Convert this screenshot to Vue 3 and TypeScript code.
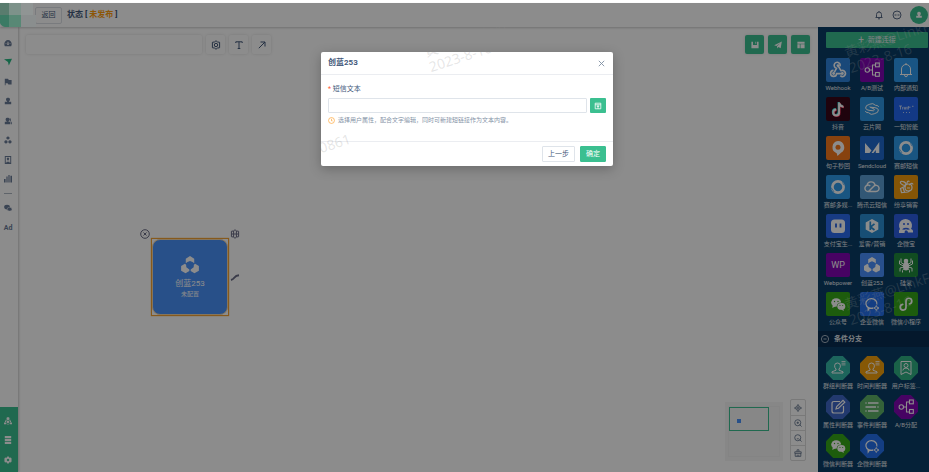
<script setup lang="ts">
import { ref } from 'vue'

interface Tile {
  name: string
  icon: string
  color: string
}

const smsText = ref('')
const keyword = ref('')

const webhook = '<g fill="none" stroke="#fff" stroke-width="1.6"><path d="M14 8.300A3 3 0 1 0 10.500 10.200L8.300 14.300"/><path d="M12 7.500L15 12.800A3 3 0 1 1 14.300 17.600"/><path d="M7.500 12.400A3 3 0 1 0 10.600 15.600H16"/></g><g fill="#fff"><circle cx="12" cy="7.600" r="1.400"/><circle cx="7.600" cy="15.500" r="1.400"/><circle cx="16.400" cy="15.500" r="1.400"/></g>'
const split = '<g fill="none" stroke="#fff" stroke-width="1.1"><circle cx="7.300" cy="12" r="2.200"/><path d="M9.500 12H12.500M15.500 7H12.500V17H15.500"/><rect x="15.500" y="5" width="3.800" height="3.800"/><rect x="15.500" y="14.500" width="3.800" height="3.800"/></g>'
const ring = '<circle cx="12" cy="12" r="5.600" fill="none" stroke="#fff" stroke-width="2.700"/><path d="M5 12.500Q7 15 8 17M17 5.500Q16 8 18 10" stroke="#2e9bec" stroke-width=".7" fill="none"/>'
const wechat = '<g fill="#fff"><ellipse cx="10.200" cy="10.500" rx="5" ry="4.300"/><path d="M6.800 13L6.300 16L9.500 14.300Z"/></g><ellipse cx="15.300" cy="14.300" rx="4.600" ry="3.900" fill="#35a818"/><ellipse cx="15.300" cy="14.400" rx="4" ry="3.400" fill="#fff"/><path d="M17 17L18 19L15 17.600Z" fill="#fff"/><g fill="#35a818"><circle cx="8.500" cy="9.500" r=".7"/><circle cx="12" cy="9.500" r=".7"/><circle cx="14" cy="13.500" r=".6"/><circle cx="16.700" cy="13.500" r=".6"/></g>'
const workchat = '<path d="M16.800 12.500A5.500 4.900 0 1 0 13 16.200L9.300 16.400L8.200 18L8 15.200" fill="none" stroke="#fff" stroke-width="1.200"/><path d="M16.300 13.500L17.100 15.200L19 16L17.100 16.800L16.300 18.500L15.500 16.800L13.700 16L15.500 15.200Z" fill="none" stroke="#fff" stroke-width=".9"/>'
const lan = '<g fill="#fff"><path d="M8.200 6.300L12 4L15.800 6.300V10.500L14.300 9.300L12 8.300L9.700 9.300L8.200 10.500Z"/><path d="M7.400 10.800L8.500 11.700L8.700 14L11.400 16V17.500L8 19.500L4 17.200V13Z"/><path d="M16.600 10.800L15.500 11.700L15.300 14L12.600 16V17.500L16 19.500L20 17.200V13Z"/></g>'
const person = '<path d="M6 17V15.800L10 14.200V13Q8.600 11.800 8.600 9.800Q8.600 7 11.500 7Q14.400 7 14.400 9.800Q14.400 11.800 13 13V14.200L17 15.800V17Z" fill="none" stroke="#fff" stroke-width="1"/><path d="M15.500 5.500H19.500M15.500 7.200H19.500M15.500 8.900H19.500" stroke="#fff" stroke-width=".8"/>'

const art: Record<string, string> = {
  webhook,
  split,
  ring,
  wechat,
  workchat,
  lan,
  person,
  bell: '<g fill="none" stroke="#fff" stroke-width="1"><path d="M6 16.500H18M7.500 16.500V11A4.500 4.500 0 0 1 16.500 11V16.500"/><path d="M12 5V6.500M10.500 16.700Q10.500 18.800 12 18.800Q13.500 18.800 13.500 16.700"/></g>',
  douyin: '<g fill="none" stroke-width="2"><path d="M12.600 5V15A2.900 2.900 0 1 1 9.700 12.100M12.600 5.500Q13.500 9 17 9.200" stroke="#25f4ee"/><path d="M13.600 6V16A2.900 2.900 0 1 1 10.700 13.100M13.600 6.500Q14.500 10 18 10.200" stroke="#fe2c55"/><path d="M13.100 5.500V15.500A2.900 2.900 0 1 1 10.200 12.600M13.100 6Q14 9.500 17.500 9.700" stroke="#fff"/></g>',
  yunpian: '<g fill="none" stroke="#fff" stroke-width="1"><path d="M18.700 10Q18 8 15.500 8.300Q13 5.500 9.800 7.200Q5.300 8.200 5.600 11Q6 13 9 13.300L13.500 13.800Q15 13.200 14 12L9.500 9.800"/><path d="M5.300 14Q6 16 8.500 15.700Q11 18.500 14.200 16.800Q18.700 15.800 18.400 13Q18 11 15 10.700L10.500 10.200"/></g>',
  yizhi: '<g fill="none" stroke="#fff" stroke-width=".8" opacity=".85"><path d="M5 9H8M6.500 9V12.500M8.700 10V12.500M10 9.800L11 12.500L12 9.800M13 10V12.500M14.300 9V12.500M14.300 10.200H16.500M18 9.300H19.500"/><path d="M9 15.500H10M12 15.500H13M15 15.500H16"/></g>',
  juzi: '<path d="M12 5A6.300 6.300 0 0 1 15 16.800L11.500 20L10.700 17.200A6.300 6.300 0 0 1 12 5Z" fill="#fff"/><circle cx="12" cy="11.200" r="2.500" fill="#f6781d"/>',
  sendcloud: '<path d="M5 7V17H9.500L11.500 14.500ZM11.500 17L19.300 6V17H15.800V14L13.500 17Z" fill="#fff"/>',
  tencent: '<g fill="none" stroke="#fff" stroke-width="1.400"><path d="M8.500 16.500H16A3.100 3.100 0 1 0 13.800 11.200L8.500 16.500A3.200 3.200 0 1 1 10.300 11M7 10.400A4.100 4.100 0 0 1 15 9.800"/></g>',
  bee: '<g fill="none" stroke="#fff" stroke-width="1.200"><ellipse cx="9.200" cy="8.300" rx="3" ry="1.600" transform="rotate(25 9.200 8.300)"/><path d="M13 9Q13 5 15.500 6.500M15 10Q18.500 7 19 9.500"/><circle cx="14.500" cy="12.500" r="3.500"/><path d="M11.500 11L6.500 13.500L7.500 17.500L14 17L16.500 15M9 12.500L10.500 17M13 13H16" /></g>',
  alipay: '<rect x="5" y="5.500" width="14" height="13.500" rx="3.500" fill="#fff"/><path d="M10 9.500V13.500M14.500 9.500V13.500" stroke="#235fe0" stroke-width="1.800"/>',
  aike: '<path d="M12 5L18.300 8.500V15.500L12 19L5.700 15.500V8.500Z" fill="#fff"/><path d="M10.300 7.500V16M14.500 9.800L10.500 13L14.500 16" stroke="#2a8fd5" stroke-width="1.700" fill="none"/>',
  qiwei: '<path d="M6 15A6.500 6.500 0 1 1 17 15Q19.500 15.500 19 18.500H14Q14 16.500 12 16.300Q10.500 16.500 10.500 19H5Q4.500 16 6 15Z" fill="#fff"/><g fill="#2c60e6"><circle cx="10" cy="10" r="1"/><circle cx="14" cy="10" r="1"/><path d="M8 15.200Q12 12.500 16 15.200L14 15.800Q12 14.500 10 15.800Z"/></g>',
  wp: '<text x="12" y="15" text-anchor="middle" font-size="9" fill="#fff">WP</text>',
  spider: '<g fill="#fff"><ellipse cx="12" cy="13.300" rx="3" ry="4.200"/><circle cx="12" cy="8" r="2.300"/></g><g fill="none" stroke="#fff" stroke-width="1"><path d="M10 11.500L7 9.500V5.500M14 11.500L17 9.500V5.500M9.500 13L5.500 11V7.500M14.500 13L18.500 11V7.500M10 14L6 15V18.500M14 14L18 15V18.500M10 15.500L8.500 17.500V19.500M14 15.500L15.500 17.500V19.500"/></g>',
  mini: '<path d="M12 15.300A2.900 2.900 0 1 1 8.700 12.300M12 15.300V9A2.900 2.900 0 1 1 15.300 12" fill="none" stroke="#fff" stroke-width="1.700" stroke-linecap="round"/>',
  bookmark: '<g fill="none" stroke="#fff" stroke-width="1"><path d="M7 5.500H17V18.500L12 16L7 18.500Z"/><circle cx="12" cy="9.500" r="2"/><path d="M8.800 14.500Q9 12 12 12Q15 12 15.200 14.500"/></g>',
  edit: '<g fill="none" stroke="#fff" stroke-width="1.200"><path d="M14 6.500H8Q6 6.500 6 8.500V16Q6 18 8 18H15.500Q17.500 18 17.500 16V11"/><path d="M10 14L10.700 11.500L17 5.300L18.800 7.200L12.500 13.300Z"/></g>',
  list: '<path d="M8 8H18.500M5.500 12H16M8 16H18.500" stroke="#fff" stroke-width="1.300"/><g fill="#fff"><circle cx="6" cy="8" r=".8"/><circle cx="18" cy="12" r=".8"/><circle cx="6" cy="16" r=".8"/></g>',
}

const connectors: Tile[] = [
  { name: 'Webhook', icon: 'webhook', color: '#2f83dc' },
  { name: 'A/B测试', icon: 'split', color: '#8207b4' },
  { name: '内部通知', icon: 'bell', color: '#2f9bf0' },
  { name: '抖音', icon: 'douyin', color: '#3a0718' },
  { name: '云片网', icon: 'yunpian', color: '#2f98e6' },
  { name: '一知智能', icon: 'yizhi', color: '#2468f2' },
  { name: '句子秒回', icon: 'juzi', color: '#f6781d' },
  { name: 'Sendcloud', icon: 'sendcloud', color: '#1f6bd0' },
  { name: '赛邮短信', icon: 'ring', color: '#2e9bec' },
  { name: '赛邮多媒...', icon: 'ring', color: '#2e9bec' },
  { name: '腾讯云短信', icon: 'tencent', color: '#5c9fd6' },
  { name: '纷享销客', icon: 'bee', color: '#f39c0c' },
  { name: '支付宝生...', icon: 'alipay', color: '#2b6cf0' },
  { name: '爱客/营销', icon: 'aike', color: '#2a8fd5' },
  { name: '企微宝', icon: 'qiwei', color: '#2c60e6' },
  { name: 'Webpower', icon: 'wp', color: '#8207b4' },
  { name: '创蓝253', icon: 'lan', color: '#4a90ff' },
  { name: '硅氢', icon: 'spider', color: '#1f8a3c' },
  { name: '公众号', icon: 'wechat', color: '#35a818' },
  { name: '企业微信', icon: 'workchat', color: '#2672ee' },
  { name: '微信小程序', icon: 'mini', color: '#35a818' },
]

const branches: Tile[] = [
  { name: '群组判断器', icon: 'person', color: '#36b8a8' },
  { name: '时间判断器', icon: 'person', color: '#f5a00c' },
  { name: '用户标签...', icon: 'bookmark', color: '#30b183' },
  { name: '属性判断器', icon: 'edit', color: '#3f68c8' },
  { name: '事件判断器', icon: 'list', color: '#5fb368' },
  { name: 'A/B分配', icon: 'split', color: '#8207b4' },
  { name: '微信判断器', icon: 'wechat', color: '#35a818' },
  { name: '企微判断器', icon: 'workchat', color: '#2672ee' },
]

const navIcons: { name: string; d: string }[] = [
  { name: '概览', d: 'M1 9Q-.5 5.500 1.500 3Q5 -.5 8.500 3Q10.500 5.500 9 9ZM4.500 3.500L4 7.500H6L5.500 3.500ZM2 5V6H3V5ZM7 5V6H8V5Z' },
  { name: '旅程', d: 'M0 1.500L10 1L6 9.500L5 5Z' },
  { name: '活动', d: 'M1 1H5L6 2.500H9.500V8H5.500L4.500 6.500H2V9H1Z' },
  { name: '用户', d: 'M5 1A2.200 2.200 0 0 1 6.200 5.200V6H9V9H1V6H3.800V5.200A2.200 2.200 0 0 1 5 1Z' },
  { name: '群组', d: 'M4.500 1A2.200 2.200 0 0 1 5.700 5.200V6H8V9H1V6H3.300V5.200A2.200 2.200 0 0 1 4.500 1ZM7 2H8.500V5L10 7V9H9V6L7.500 5Z' },
  { name: '资源', d: 'M5 .5A2 2 0 1 1 4.900 .5ZM2.500 5.300A2 2 0 1 1 2.400 5.300ZM7.500 5.300A2 2 0 1 1 7.400 5.300Z' },
  { name: '标签', d: 'M1 0H9V10H1ZM2.200 1.200V8.500L5 7L7.800 8.500V1.200ZM5 2A1.500 1.500 0 1 1 4.900 2ZM3 6.800Q5 4.500 7 6.800L5 6Z' },
  { name: '报表', d: 'M0 5H2V9.500H0ZM3 2H4.500V9.500H3ZM5.500 0H7V9.500H5.500ZM8 1H10V9.500H8Z' },
]
</script>

<template>
  <div class="page">
    <header class="topbar">
      <button class="back" type="button">返回</button>
      <h1>状态 [<em> 未发布 </em>]</h1>
      <div class="account">
        <svg viewBox="0 0 10 10"><path d="M1.500 7.500H8.500M2.500 7.500V4.500A2.500 2.500 0 0 1 7.500 4.500V7.500M5 1V2M4 8.800H6" /></svg>
        <svg viewBox="0 0 10 10"><circle cx="5" cy="5" r="4" /><path d="M2.500 5H4M4.500 5H5.500M6 5H7.500" /></svg>
        <span class="avatar">
          <svg viewBox="0 0 10 10"><path d="M5 1A2.300 2.300 0 0 1 6.300 5.200V6H8.500V8.500H1.500V6H3.700V5.200A2.300 2.300 0 0 1 5 1Z" /></svg>
        </span>
      </div>
    </header>

    <div class="workspace">
      <nav class="rail">
        <div class="rail-main">
          <a v-for="(n, i) in navIcons" :key="n.name" href="#" :aria-label="n.name" :class="{ active: i === 1 }">
            <svg viewBox="0 0 10 10"><path fill-rule="evenodd" :d="n.d" /></svg>
          </a>
        </div>
        <hr />
        <div class="rail-extra">
          <a href="#" aria-label="微信">
            <svg viewBox="0 0 10 10"><ellipse cx="3.800" cy="3.800" rx="3.600" ry="3" /><ellipse cx="7" cy="6.500" rx="3" ry="2.400" stroke="#fff" stroke-width=".6" /></svg>
          </a>
          <a href="#" class="ad">Ad</a>
        </div>
        <div class="rail-foot">
          <a href="#" aria-label="组织"><svg viewBox="0 0 10 10"><path d="M5 0L6.800 1V3L5 4L3.200 3V1ZM5 4.500A1.500 1.500 0 1 1 4.900 4.500ZM2.500 3L1 6L2.300 6.500L3.300 4.500ZM7.500 3L9 6L7.700 6.500L6.700 4.500ZM0 7H3V9H0ZM7 7H10V9H7ZM4 8.500H6V9.500H4Z" /></svg></a>
          <a href="#" aria-label="列表"><svg viewBox="0 0 10 10"><path d="M1 0H9V2.800H1ZM1 3.600H9V6.400H1ZM1 7.200H9V10H1Z" /></svg></a>
          <a href="#" aria-label="设置"><svg viewBox="0 0 10 10"><path fill-rule="evenodd" d="M4 .5H6L6.400 1.800L7.500 2.300L8.700 2L9.800 4L8.900 5L9.800 6L8.700 8L7.500 7.700L6.400 8.200L6 9.500H4L3.600 8.200L2.500 7.700L1.300 8L.2 6L1.100 5L.2 4L1.300 2L2.500 2.300L3.600 1.800ZM5 3.500A1.500 1.500 0 1 0 5.100 3.500Z" /></svg></a>
        </div>
      </nav>

      <main class="canvas">
        <div class="tools">
          <input v-model="keyword" class="search" type="text" aria-label="搜索" />
          <button type="button" aria-label="设置"><svg viewBox="0 0 10 10"><path d="M5 .7L6.300 1.900L8.600 2.300V7.700L6.300 8.100L5 9.300L3.700 8.100L1.400 7.700V2.300L3.700 1.900Z" /><circle cx="5" cy="5" r="1.700" /></svg></button>
          <button type="button" aria-label="文本"><svg viewBox="0 0 10 10"><path d="M1.800 3V1.800H8.200V3M5 1.800V8.500M3.700 8.500H6.300" /></svg></button>
          <button type="button" aria-label="连线"><svg viewBox="0 0 10 10"><path d="M1.800 8.200L8 2M3.500 2H8V6.500" /></svg></button>
          <div class="actions">
            <button type="button" aria-label="保存"><svg viewBox="0 0 10 10"><path fill-rule="evenodd" d="M.5 1H9.500V9H.5ZM2.500 1V5H7.500V1H6.500V3.500H5.500V1Z" /></svg></button>
            <button type="button" aria-label="发布"><svg viewBox="0 0 10 10"><path d="M9.800 .5L8.300 9L5.500 7.500L4.200 9.500L3.800 6.700L8 2.500L3 6.200L.2 5.200Z" /></svg></button>
            <button type="button" aria-label="布局"><svg viewBox="0 0 10 10"><path d="M.5 1H9.500V3.300H.5ZM.5 4.200H3.500V9H.5ZM4.400 4.200H9.500V9H4.400Z" /></svg></button>
          </div>
        </div>

        <div class="node">
          <div class="node-card">
            <svg viewBox="3 3 18 18" v-html="art.lan"></svg>
            <strong>创蓝253</strong>
            <span>未配置</span>
          </div>
          <svg class="node-close" viewBox="0 0 10 10"><circle cx="5" cy="5" r="4.300" /><path d="M3.500 3.500L6.500 6.500M6.500 3.500L3.500 6.500" /></svg>
          <svg class="node-gear" viewBox="0 0 10 10"><path d="M5 .7L6.300 1.900L8.600 2.300V7.700L6.300 8.100L5 9.300L3.700 8.100L1.400 7.700V2.300L3.700 1.900ZM3.600 2V8M6.400 2V8M1.500 5H8.500" /></svg>
          <svg class="node-link" viewBox="0 0 10 10"><path d="M1 8Q3 7.500 4.500 5.500T9 3.200" /></svg>
        </div>

        <div class="map-area">
          <div class="minimap"><div class="map-page"><div class="map-view"><i></i></div></div></div>
          <div class="zoom">
            <button type="button" aria-label="定位"><svg viewBox="0 0 10 10"><circle cx="5" cy="5" r="2.800" /><circle cx="5" cy="5" r=".8" /><path d="M5 0V3M5 7V10M0 5H3M7 5H10" /></svg></button>
            <button type="button" aria-label="放大"><svg viewBox="0 0 10 10"><circle cx="4.700" cy="4.700" r="3.800" /><path d="M7 7L9.500 9.500M3.200 4.700H6.200M4.700 3.200V6.200" /></svg></button>
            <button type="button" aria-label="缩小"><svg viewBox="0 0 10 10"><circle cx="4.700" cy="4.700" r="3.800" /><path d="M7 7L9.500 9.500M3.500 6H6" /></svg></button>
            <button type="button" aria-label="清理"><svg viewBox="0 0 10 10"><path d="M3.800 3.500V1H6.200V3.500M1 3.500H9V5.500H1ZM1.500 5.500V9.200H8.500V5.500M4 7V9M6 7V9" /></svg></button>
          </div>
        </div>
      </main>

      <aside class="panel">
        <button class="create" type="button"><b>+</b>新建连接</button>
        <ul class="tiles">
          <li v-for="t in connectors" :key="t.name">
            <svg class="tile" viewBox="0 0 24 24" :style="{ backgroundColor: t.color }" v-html="art[t.icon]"></svg>
            <span>{{ t.name }}</span>
          </li>
        </ul>
        <h2>
          <svg viewBox="0 0 10 10"><circle cx="5" cy="5" r="4.500" /><path d="M3 5H7" /></svg>
          条件分支
        </h2>
        <ul class="tiles branch">
          <li v-for="t in branches" :key="t.name">
            <svg class="tile" viewBox="0 0 24 24" :style="{ backgroundColor: t.color }" v-html="art[t.icon]"></svg>
            <span>{{ t.name }}</span>
          </li>
        </ul>
      </aside>
    </div>

    <div class="mask">
      <svg class="logo" viewBox="0 0 36 24">
        <path d="M0 0H9V12H0Z" fill="#597c6e" />
        <path d="M0 12H9V24H5Q1 23 0 20Z" fill="#3b7a64" />
        <path d="M9 0H21V12H9Z" fill="#7d928a" />
        <path d="M9 12H21V24H9Z" fill="#588875" />
        <path d="M21 0H33V12H21Z" fill="#909594" />
        <path d="M21 12H36V24H21Z" fill="#8a8e8e" />
      </svg>
      <form class="dialog" role="dialog" aria-labelledby="dialog-title" @submit.prevent>
        <div class="dialog-head">
          <h3 id="dialog-title">创蓝253</h3>
          <button type="button" aria-label="关闭"><svg viewBox="0 0 10 10"><path d="M2 2L8 8M8 2L2 8" /></svg></button>
        </div>
        <div class="dialog-body">
          <label for="sms"><i>*</i> 短信文本</label>
          <div class="field">
            <input id="sms" v-model="smsText" type="text" />
            <button type="button" aria-label="插入属性"><svg viewBox="0 0 10 10"><path d="M1.500 1.500H8.500V8.500H1.500ZM1.500 3.500H8.500M5 3.500V8.500M3.500 5.500H6.500" /></svg></button>
          </div>
          <p>
            <svg viewBox="0 0 10 10"><circle cx="5" cy="5" r="4.200" /><path d="M5 2.500V5.500H6.500" /></svg>
            选择用户属性，配合文字编辑，同时可新建短链接作为文本内容。
          </p>
        </div>
        <div class="dialog-foot">
          <button type="button">上一步</button>
          <button type="submit" class="ok">确定</button>
        </div>
      </form>
    </div>

    <div class="watermarks" aria-hidden="true">
      <p class="wm-dialog">黄彩燕@LinkF<br />2023-8-16</p>
      <p class="wm-code">0861</p>
      <p class="wm-top">黄彩燕@LinkF<br />2023-8-16</p>
      <p class="wm-bottom">黄彩燕@LinkF<br />2023-8-16</p>
    </div>
  </div>
</template>

<style>
body {
  overflow: hidden;
}
</style>

<style scoped>
* {
  box-sizing: border-box;
}
.page {
  position: relative;
  display: flex;
  flex-direction: column;
  height: 100vh;
  padding-top: 3px;
  overflow: hidden;
  background: #fff;
  color: #43597a;
  font-family: Roboto, "Noto Sans CJK SC", sans-serif;
  font-size: 7px;
  line-height: 10px;
}
button,
input {
  margin: 0;
  padding: 0;
  border: 0;
  font: inherit;
  color: inherit;
  outline: none;
}
button {
  display: flex;
  align-items: center;
  justify-content: center;
  background: none;
}
a {
  color: inherit;
  text-decoration: none;
}
h1,
h2,
h3,
p,
ul {
  margin: 0;
  padding: 0;
  list-style: none;
}
svg {
  display: block;
  flex: none;
}
.topbar {
  position: relative;
  display: flex;
  align-items: center;
  gap: 5px;
  flex: none;
  height: 24px;
  padding: 0 1px 0 35px;
  box-shadow: 0 1px 2px rgba(0, 0, 0, 0.2);
}
.back {
  width: 27px;
  height: 17px;
  border: 1px solid #dde0e6;
  border-radius: 2px;
}
h1 {
  font-size: 8px;
  font-weight: 700;
  white-space: pre;
}
h1 em {
  color: #ff9d0a;
  font-style: normal;
}
.account {
  display: flex;
  align-items: center;
  gap: 8px;
  margin-left: auto;
}
.account > svg {
  width: 10px;
  height: 10px;
  fill: none;
  stroke: #5a6c88;
}
.avatar {
  display: grid;
  place-items: center;
  width: 18px;
  height: 18px;
  border-radius: 50%;
  background: #3bbf90;
}
.avatar svg {
  width: 8px;
  height: 8px;
  fill: #fff;
}
.workspace {
  display: grid;
  grid-template-columns: 18px 1fr 111px;
  flex: 1;
  min-height: 0;
}
.rail {
  display: flex;
  flex-direction: column;
  padding-top: 6px;
  box-shadow: 1px 0 2px rgba(0, 0, 0, 0.2);
}
.rail-main {
  display: grid;
  grid-template-rows: repeat(8, 1fr);
  height: 156px;
}
.rail a {
  display: grid;
  place-items: center;
  padding-right: 2px;
}
.rail svg {
  width: 8px;
  height: 8px;
  fill: #6b7c98;
}
.rail .active svg {
  fill: #27ba83;
}
.rail hr {
  width: 8px;
  height: 1px;
  margin: 4px 4px;
  border: 0;
  background: #aeb6c2;
}
.rail-extra {
  display: grid;
  grid-template-rows: 20px 20px;
}
.ad {
  color: #6b7c98;
  font-weight: 700;
}
.rail-foot {
  display: grid;
  grid-template-rows: repeat(3, 1fr);
  height: 65px;
  margin-top: auto;
  padding: 4px 0 2px;
  background: #3bbf90;
}
.rail-foot svg {
  fill: #fff;
}
.canvas {
  position: relative;
  display: flex;
  flex-direction: column;
  justify-content: space-between;
  padding: 8px 8px 11px;
}
.tools {
  display: flex;
  gap: 4px;
}
.search,
.tools button {
  height: 19px;
  border-radius: 2px;
  background: #fff;
  box-shadow: 0 0 3px rgba(0, 0, 0, 0.14);
}
.search {
  width: 176px;
}
.tools button {
  width: 19px;
}
.tools svg {
  width: 10px;
  height: 10px;
  fill: none;
  stroke: #43597a;
}
.actions {
  display: flex;
  gap: 4px;
  margin-left: auto;
}
.actions button {
  background: #3bbf90;
}
.actions svg {
  width: 8px;
  height: 8px;
  fill: #fff;
  stroke: none;
}
.node {
  position: absolute;
  left: 133px;
  top: 211px;
  width: 78px;
  height: 78px;
  border: 1px solid #f5a334;
  background: #fff;
  box-shadow: 0 0 1px #f5a334;
}
.node-card {
  display: flex;
  flex-direction: column;
  align-items: center;
  height: 100%;
  padding-top: 15px;
  border: 1px solid #f3d5a8;
  border-radius: 8px;
  background: #4a92fa;
  color: #fff;
}
.node-card svg {
  width: 20px;
  height: 20px;
}
.node-card strong {
  margin-top: 4px;
  font-size: 8px;
  font-weight: 400;
}
.node-card span {
  font-size: 6px;
}
.node-close,
.node-gear,
.node-link {
  position: absolute;
  width: 10px;
  height: 10px;
  fill: none;
  stroke: #6a6c86;
}
.node-close {
  left: -12px;
  top: -10px;
}
.node-gear {
  right: -12px;
  top: -10px;
}
.node-link {
  right: -12px;
  top: 33px;
  stroke-width: 2;
}
.map-area {
  display: flex;
  align-items: flex-end;
  justify-content: flex-end;
  gap: 7px;
  padding-right: 4px;
}
.minimap {
  width: 58px;
  height: 59px;
  padding: 4px 3px;
  background: #f6f6f6;
}
.map-page {
  height: 51px;
  border: 1px solid #f0f0f0;
}
.map-view {
  width: 40px;
  height: 23px;
  padding: 11px 7px;
  border: 1px solid #3bbf90;
}
.map-view i {
  display: block;
  width: 4px;
  height: 4px;
  background: #4a92fa;
}
.zoom {
  width: 16px;
  border: 1px solid #dcdcdc;
  border-radius: 2px;
}
.zoom button {
  width: 14px;
  height: 15px;
}
.zoom button + button {
  border-top: 1px solid #dcdcdc;
}
.zoom svg {
  width: 8px;
  height: 8px;
  fill: none;
  stroke: #5d6e88;
}
.panel {
  position: relative;
  overflow: hidden;
  padding-top: 5px;
  background: #0a3d66;
  color: #e4e9ee;
}
.create {
  gap: 4px;
  width: 102px;
  height: 16px;
  margin-left: 8px;
  border-radius: 1px;
  background: #3bbf90;
}
.create b {
  font-size: 10px;
  font-weight: 400;
}
.tiles {
  display: grid;
  grid-template-columns: repeat(3, 34px);
  grid-auto-rows: 39px;
  padding: 10px 0 0 3px;
}
.tiles li {
  display: flex;
  flex-direction: column;
  align-items: center;
  gap: 1px;
  font-size: 6px;
  white-space: nowrap;
}
.tile {
  width: 24px;
  height: 24px;
  border-radius: 2px;
}
.branch .tile {
  border-radius: 0;
  clip-path: polygon(30% 0, 70% 0, 100% 30%, 100% 70%, 70% 100%, 30% 100%, 0 70%, 0 30%);
}
h2 {
  display: flex;
  align-items: center;
  gap: 5px;
  height: 16px;
  padding-left: 3px;
  background: #082c50;
  font-size: 7px;
  font-weight: 700;
}
h2 svg {
  width: 8px;
  height: 8px;
  fill: none;
  stroke: #cdd6e0;
}
.branch {
  padding-top: 9px;
}
.mask {
  position: absolute;
  inset: 3px 0 0;
  display: flex;
  align-items: flex-start;
  justify-content: center;
  padding: 49px 0 0 5px;
  background: rgba(0, 0, 0, 0.45);
}
.logo {
  position: absolute;
  left: 0;
  top: 0;
  width: 36px;
  height: 24px;
}
.dialog {
  width: 292px;
  border-radius: 2px;
  background: #fff;
  box-shadow: 0 3px 12px rgba(0, 0, 0, 0.25);
}
.dialog-head {
  display: flex;
  align-items: center;
  justify-content: space-between;
  height: 23px;
  padding: 0 7px;
  border-bottom: 1px solid #ebedf1;
}
h3 {
  font-size: 8px;
  font-weight: 700;
}
.dialog-head svg {
  width: 9px;
  height: 9px;
  stroke: #7f8fa3;
}
.dialog-body {
  height: 66px;
  padding: 8px 7px 0;
}
label {
  display: block;
  line-height: 12px;
}
label i {
  color: #ff5a36;
  font-style: normal;
}
.field {
  display: flex;
  gap: 3px;
  margin: 3px 0 2px;
}
.field input {
  flex: 1;
  min-width: 0;
  height: 15px;
  border: 1px solid #dfe4ea;
  border-radius: 1px;
  background: transparent;
}
.field button {
  width: 16px;
  height: 15px;
  border-radius: 1px;
  background: #3bbf90;
}
.field svg {
  width: 8px;
  height: 8px;
  fill: none;
  stroke: #fff;
}
.dialog-body p {
  display: flex;
  align-items: center;
  gap: 3px;
  color: #8492a6;
  font-size: 6px;
}
.dialog-body p svg {
  width: 7px;
  height: 7px;
  fill: none;
  stroke: #ffa63a;
}
.dialog-foot {
  display: flex;
  align-items: center;
  justify-content: flex-end;
  gap: 5px;
  height: 25px;
  padding: 0 7px;
  border-top: 1px solid #ebedf1;
}
.dialog-foot button {
  height: 16px;
  padding: 0 5px;
  border: 1px solid #dfe4ea;
  border-radius: 1px;
}
.dialog-foot .ok {
  border-color: #3bbf90;
  background: #3bbf90;
  color: #fff;
}
.watermarks {
  position: absolute;
  inset: 0;
  overflow: hidden;
  pointer-events: none;
  color: rgba(140, 140, 140, 0.22);
  font-family: "Noto Sans", "Noto Sans CJK SC", sans-serif;
  font-size: 14px;
  line-height: 16px;
  white-space: nowrap;
}
.watermarks p {
  position: absolute;
  transform: rotate(-18deg);
  transform-origin: 0 100%;
}
.wm-dialog {
  left: 432px;
  top: 43px;
}
.wm-code {
  left: 322px;
  top: 140px;
}
.wm-top {
  left: 852px;
  top: 44px;
}
.wm-bottom {
  left: 852px;
  top: 296px;
}
</style>
